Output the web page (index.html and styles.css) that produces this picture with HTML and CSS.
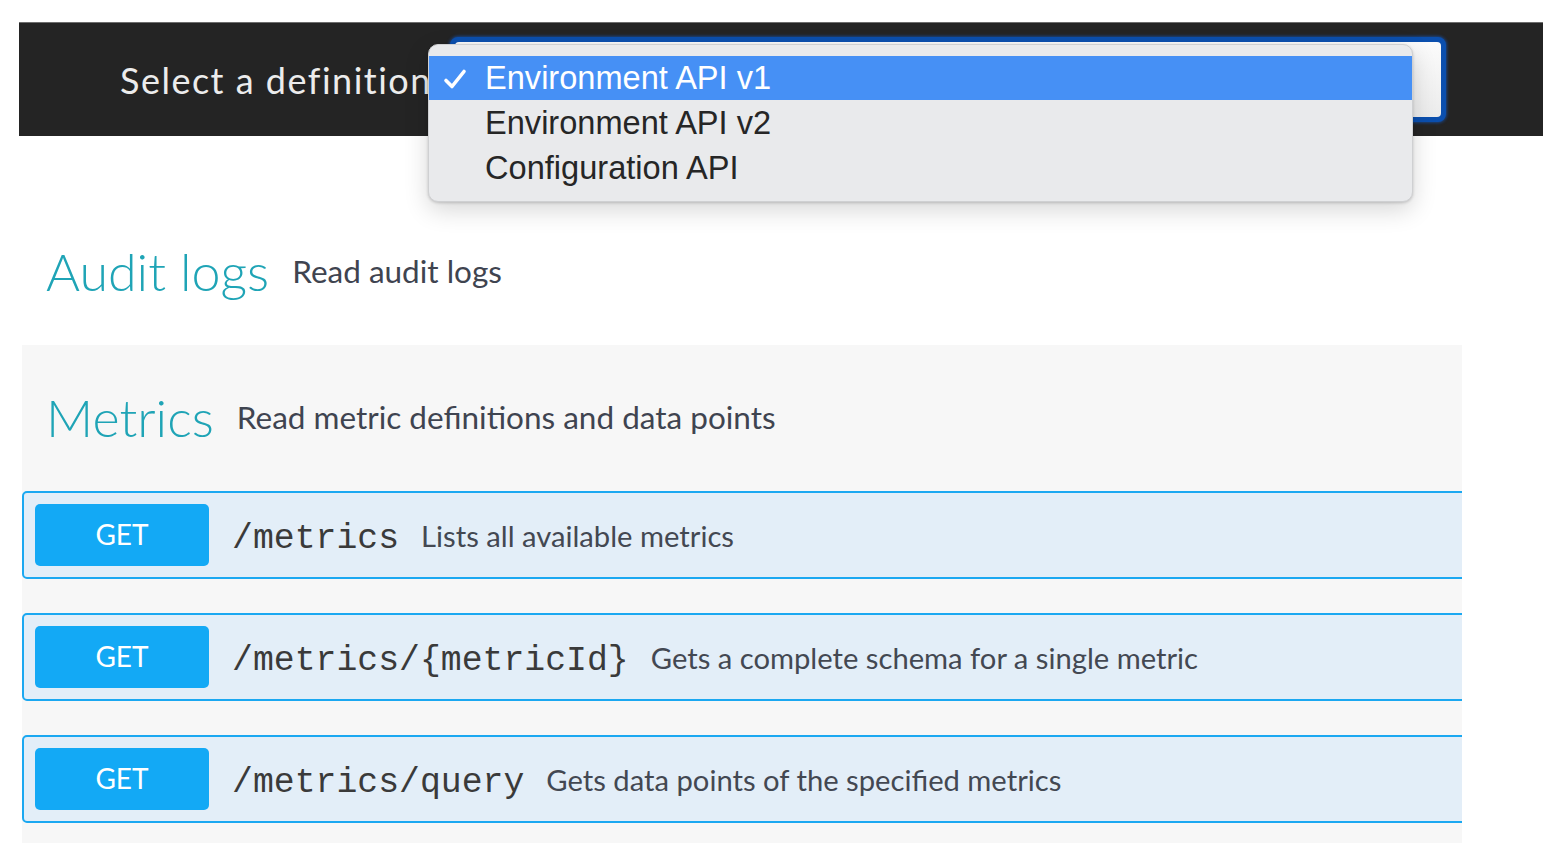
FILE: index.html
```html
<!DOCTYPE html>
<html lang="en">
<head>
<meta charset="utf-8">
<title>API definitions</title>
<link rel="stylesheet" href="styles.css">
</head>
<body>
<div class="page">
  <header class="topbar">
    <span class="topbar-label">Select a definition</span>
    <div class="select-box"><div class="select-inner"></div></div>
  </header>

  <ul class="menu">
    <li class="menu-item is-active">
      <svg class="menu-check" viewBox="0 0 24 24" width="24" height="24"><path d="M3 13.5 L9 19.5 L21 4.5" fill="none" stroke="#fff" stroke-width="3.6" stroke-linecap="round" stroke-linejoin="round"/></svg>
      <span>Environment API v1</span>
    </li>
    <li class="menu-item"><span>Environment API v2</span></li>
    <li class="menu-item"><span>Configuration API</span></li>
  </ul>

  <section class="tag tag-closed">
    <h2 class="tag-title">Audit logs</h2>
    <span class="tag-desc">Read audit logs</span>
  </section>

  <section class="tag-open">
    <div class="tag tag-head">
      <h2 class="tag-title">Metrics</h2>
      <span class="tag-desc">Read metric definitions and data points</span>
    </div>

    <div class="op">
      <span class="op-method">GET</span>
      <span class="op-path">/metrics</span>
      <span class="op-desc">Lists all available metrics</span>
    </div>
    <div class="op">
      <span class="op-method">GET</span>
      <span class="op-path">/metrics/{metricId}</span>
      <span class="op-desc">Gets a complete schema for a single metric</span>
    </div>
    <div class="op">
      <span class="op-method">GET</span>
      <span class="op-path">/metrics/query</span>
      <span class="op-desc">Gets data points of the specified metrics</span>
    </div>
  </section>
</div>
</body>
</html>
```

FILE: styles.css
```css
html, body {
  margin: 0;
  padding: 0;
  background: #ffffff;
}

body {
  font-family: Lato, "Open Sans", sans-serif;
  overflow: hidden;
}

.page {
  position: relative;
  width: 1556px;
  height: 843px;
  padding-top: 22px;
  box-sizing: border-box;
}

/* Top bar */
.topbar {
  margin-left: 19px;
  width: 1524px;
  height: 114px;
  box-sizing: border-box;
  background: #242424;
  border-top: 1px solid #6d6d6d;
  display: flex;
  align-items: center;
  padding-left: 101px;
}

.topbar-label {
  flex: 0 0 330px;
  color: #ececec;
  font-size: 36px;
  letter-spacing: 1.5px;
  white-space: nowrap;
}

.select-box {
  width: 996px;
  height: 85px;
  box-sizing: border-box;
  border: 5px solid #0b4fae;
  border-radius: 8px;
  background: #0b4fae;
  box-shadow: 0 0 3px 1px rgba(20, 90, 200, 0.6);
  margin-bottom: 1px;
}

.select-inner {
  height: 100%;
  border-radius: 4px;
  background: linear-gradient(#fbfbfb, #ececec);
}

/* Dropdown menu */
.menu {
  position: absolute;
  left: 428px;
  top: 44px;
  width: 985px;
  margin: 0;
  padding: 11px 0;
  list-style: none;
  box-sizing: border-box;
  background: #e9eaec;
  border-radius: 10px;
  border: 1px solid #cfd0d2;
  box-shadow: 0 8px 24px rgba(0, 0, 0, 0.16), 0 1px 3px rgba(0, 0, 0, 0.18);
  z-index: 5;
}

.menu-item {
  position: relative;
  height: 45px;
  display: flex;
  align-items: center;
  padding-left: 56px;
  font-family: "Liberation Sans", Arial, sans-serif;
  font-size: 32.6px;
  color: #262626;
}

.menu-item.is-active {
  height: 44px;
  background: #4690f5;
  color: #ffffff;
}

.menu-check {
  position: absolute;
  left: 14px;
  top: 11px;
}

/* Tags */
.tag {
  display: flex;
  align-items: center;
  gap: 23px;
  padding-left: 46px;
}

.tag-closed {
  height: 209px;
  box-sizing: border-box;
  padding-top: 109px;
  align-items: flex-start;
}

.tag-closed .tag-desc {
  margin-top: 7px;
}

.tag-title {
  margin: 0;
  font-size: 52px;
  font-weight: 300;
  line-height: 52px;
  color: #1fa4b6;
}

.tag-desc {
  font-size: 31.5px;
  line-height: 38px;
  color: #3f4450;
}

.tag-open {
  margin-left: 22px;
  width: 1440px;
  height: 498px;
  background: #f7f7f7;
  overflow: hidden;
}

.tag-head {
  padding: 46px 0 48px 24px;
}

/* Operations */
.op {
  display: flex;
  align-items: center;
  height: 88px;
  box-sizing: border-box;
  margin-bottom: 34px;
  margin-right: -4px;
  background: #e3eef8;
  border: 2px solid #1ba8f1;
  border-radius: 5px;
  padding: 0 11px;
}

.op-method {
  flex: 0 0 174px;
  height: 62px;
  display: flex;
  align-items: center;
  justify-content: center;
  background: #13a9f5;
  border-radius: 5px;
  color: #ffffff;
  font-size: 28px;
  padding-bottom: 2px;
  box-sizing: border-box;
}

.op-path {
  margin-left: 23px;
  margin-top: 6px;
  font-family: "Liberation Mono", "Courier New", monospace;
  font-size: 34.8px;
  color: #3a3a3a;
}

.op-desc {
  margin-left: 22px;
  font-size: 29.2px;
  color: #434852;
}
```
